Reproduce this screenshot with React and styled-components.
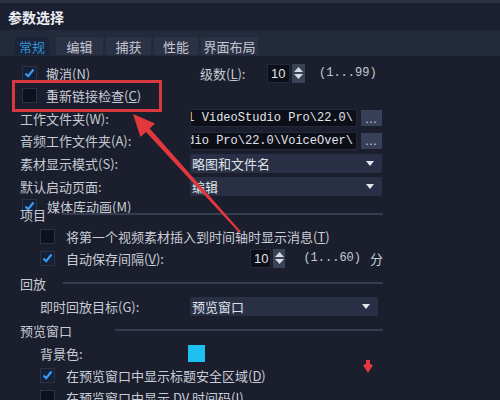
import React from 'react';
import styled, { createGlobalStyle } from 'styled-components';

const GlobalStyle = createGlobalStyle`
  html, body {
    margin: 0;
    padding: 0;
    background: #1b1f2d;
  }
  body {
    font-family: "Noto Sans CJK SC", "Noto Sans", sans-serif;
    overflow: hidden;
  }
`;

const Dialog = styled.div`
  position: relative;
  width: 500px;
  height: 400px;
  overflow: hidden;
  background: #1b1f2d;
  color: #c6cad3;
  font-size: 13px;
  line-height: 1;
`;

const TitleBar = styled.div`
  height: 27px;
  border-top: 3px solid #2c3246;
  background: #1b2030;
  display: flex;
  align-items: center;
  padding-left: 8px;
  font-size: 14px;
  font-weight: bold;
  color: #eceef3;
`;

const TabStrip = styled.div`
  box-sizing: border-box;
  height: 26px;
  padding: 7px 0 0 15px;
  background: #232a3b;
  display: flex;
  align-items: flex-start;
  gap: 3px;
`;

const Tab = styled.div`
  width: ${p => p.$w}px;
  height: 18px;
  margin-right: ${p => (p.$active ? 4 : 0)}px;
  display: flex;
  align-items: center;
  justify-content: center;
  background: ${p => (p.$active ? '#1a2539' : '#2b3246')};
  color: ${p => (p.$active ? '#3593da' : '#c4c8d1')};
  font-size: 13px;
`;

const Content = styled.div`
  width: 383px;
  padding-top: 6px;
  display: flex;
  flex-direction: column;
`;

const Row = styled.div`
  height: ${p => p.$h || 22}px;
  margin-top: ${p => p.$mt || 0}px;
  padding-left: ${p => p.$indent}px;
  display: flex;
  align-items: center;
  white-space: nowrap;
`;

const Segment = styled.div`
  width: ${p => p.$w}px;
  display: flex;
  align-items: center;
  flex-shrink: 0;
`;

const Label = styled.div`
  width: ${p => p.$w}px;
  flex-shrink: 0;
  color: #c6cad3;
`;

const Box = styled.div`
  box-sizing: border-box;
  width: 15px;
  height: 15px;
  flex-shrink: 0;
  margin-right: ${p => p.$gap || 9}px;
  border: 1px solid #2b3244;
  background: ${p => (p.$checked ? '#142038' : '#0d1120')};
  display: flex;
  align-items: center;
  justify-content: center;
`;

const CheckText = styled.span`
  color: #c9cdd6;
`;

const PathField = styled.div`
  box-sizing: border-box;
  width: 167px;
  height: 18px;
  padding-right: 3px;
  overflow: hidden;
  display: flex;
  justify-content: flex-end;
  align-items: center;
  background: #0c0f18;
  border: 1px solid #232938;
  font-family: "Liberation Mono", monospace;
  font-size: 12px;
  color: #e2e4ea;
`;

const Browse = styled.div`
  width: 21px;
  height: 16px;
  margin-left: 4px;
  background: #384058;
  color: #c6cee0;
  font-size: 11px;
  display: flex;
  align-items: center;
  justify-content: center;
  letter-spacing: 1px;
`;

const Select = styled.div`
  box-sizing: border-box;
  position: relative;
  width: ${p => p.$w || 192}px;
  height: 19px;
  padding-left: 2px;
  display: flex;
  align-items: center;
  background: #293045;
  border-radius: 2px;
  color: #dfe2e9;
  font-size: 13px;
  overflow: hidden;
`;

const Caret = styled.svg`
  position: absolute;
  right: 8px;
  top: 7px;
`;

const SpinValue = styled.div`
  box-sizing: border-box;
  width: 23px;
  height: 19px;
  padding-left: 3px;
  display: flex;
  align-items: center;
  background: #0c0f18;
  border: 1px solid #232938;
  font-family: "Liberation Sans", sans-serif;
  font-size: 13px;
  color: #e0e3ea;
`;

const SpinArrows = styled.div`
  width: 13px;
  height: 19px;
  margin-left: 2px;
  background: #3a4258;
  display: flex;
  flex-direction: column;
  align-items: center;
  justify-content: center;
  gap: 2px;
`;

const Hint = styled.span`
  margin-left: ${p => p.$ml}px;
  font-family: "Liberation Mono", monospace;
  font-size: 12px;
  color: #c6cad3;
`;

const Unit = styled.span`
  margin-left: 9px;
`;

const GroupHeader = styled.div`
  position: relative;
  height: 16px;
  margin-top: ${p => p.$mt}px;
  padding-left: 20px;
  display: flex;
  align-items: center;
`;

const GroupTitle = styled.span`
  color: #c6cad3;
  white-space: nowrap;
`;

const GroupLine = styled.div`
  flex: 1;
  height: 2px;
  margin-left: ${p => p.$gap}px;
  background: #363d50;
`;

const Swatch = styled.div`
  width: 17px;
  height: 17px;
  background: #1ec0f2;
`;

const Highlight = styled.div`
  position: absolute;
  left: 12px;
  top: 80px;
  width: 150px;
  height: 32px;
  box-sizing: border-box;
  border: 3px solid #d8393e;
`;

const Overlay = styled.svg`
  position: absolute;
  left: 0;
  top: 0;
  pointer-events: none;
`;

const Check = ({ checked, gap }) => (
  <Box $checked={checked} $gap={gap}>
    {checked && (
      <svg width="11" height="10" viewBox="0 0 11 10">
        <polyline points="1.5,5.5 4.2,8.2 9.5,1.5" fill="none" stroke="#3d9bef" strokeWidth="2.2" />
      </svg>
    )}
  </Box>
);

const Spin = ({ value }) => (
  <>
    <SpinValue>{value}</SpinValue>
    <SpinArrows>
      <svg width="9" height="5" viewBox="0 0 9 5"><polygon points="0,5 4.5,0 9,5" fill="#d5dae6" /></svg>
      <svg width="9" height="5" viewBox="0 0 9 5"><polygon points="0,0 9,0 4.5,5" fill="#d5dae6" /></svg>
    </SpinArrows>
  </>
);

const Dropdown = ({ children, w }) => (
  <Select $w={w}>
    {children}
    <Caret width="8" height="5" viewBox="0 0 8 5"><polygon points="0,0 8,0 4,5" fill="#e4e7ee" /></Caret>
  </Select>
);

const tabs = [
  { name: '常规', w: 34, active: true },
  { name: '编辑', w: 47 },
  { name: '捕获', w: 45 },
  { name: '性能', w: 44 },
  { name: '界面布局', w: 57 },
];

export default function App() {
  return (
    <Dialog>
      <GlobalStyle />
      <TitleBar>参数选择</TitleBar>
      <TabStrip>
        {tabs.map(t => (
          <Tab key={t.name} $w={t.w} $active={t.active}>{t.name}</Tab>
        ))}
      </TabStrip>
      <Content>
        <Row $indent={22}>
          <Segment $w={178}>
            <Check checked />
            <CheckText>撤消(<u>N</u>)</CheckText>
          </Segment>
          <Label $w={67}>级数(<u>L</u>):</Label>
          <Spin value="10" />
          <Hint $ml={14}>(1...99)</Hint>
        </Row>
        <Row $indent={22} $h={23}>
          <Check />
          <CheckText>重新链接检查(<u>C</u>)</CheckText>
        </Row>
        <Row $indent={20}>
          <Label $w={170}>工作文件夹(W):</Label>
          <PathField>C:\Users\Administrator\Documents\Corel VideoStudio Pro\22.0\</PathField>
          <Browse>...</Browse>
        </Row>
        <Row $indent={20} $h={23}>
          <Label $w={170}>音频工作文件夹(A):</Label>
          <PathField>C:\Users\Administrator\Documents\Corel VideoStudio Pro\22.0\VoiceOver\</PathField>
          <Browse>...</Browse>
        </Row>
        <Row $indent={20} $h={23}>
          <Label $w={170}>素材显示模式(S):</Label>
          <Dropdown>略图和文件名</Dropdown>
        </Row>
        <Row $indent={20}>
          <Label $w={170}>默认启动页面:</Label>
          <Dropdown>编辑</Dropdown>
        </Row>
        <Row $indent={22} $h={18}>
          <Check checked gap={10} />
          <CheckText>媒体库动画(<u>M</u>)</CheckText>
        </Row>
        <GroupHeader $mt={-9}>
          <GroupTitle>项目</GroupTitle>
          <GroupLine $gap={16} />
        </GroupHeader>
        <Row $indent={40} $mt={3}>
          <Check gap={11} />
          <CheckText>将第一个视频素材插入到时间轴时显示消息(<u>T</u>)</CheckText>
        </Row>
        <Row $indent={40}>
          <Segment $w={210}>
            <Check checked gap={11} />
            <CheckText>自动保存间隔(<u>V</u>):</CheckText>
          </Segment>
          <Spin value="10" />
          <Hint $ml={18}>(1...60)</Hint>
          <Unit>分</Unit>
        </Row>
        <GroupHeader $mt={6}>
          <GroupTitle>回放</GroupTitle>
          <GroupLine $gap={17} />
        </GroupHeader>
        <Row $indent={40} $mt={4}>
          <Label $w={150}>即时回放目标(G):</Label>
          <Dropdown w={188}>预览窗口</Dropdown>
        </Row>
        <GroupHeader $mt={5}>
          <GroupTitle>预览窗口</GroupTitle>
          <GroupLine $gap={43} />
        </GroupHeader>
        <Row $indent={40} $mt={4}>
          <Label $w={148}>背景色:</Label>
          <Swatch />
        </Row>
        <Row $indent={40}>
          <Check checked gap={11} />
          <CheckText>在预览窗口中显示标题安全区域(<u>D</u>)</CheckText>
        </Row>
        <Row $indent={40}>
          <Check gap={11} />
          <CheckText>在预览窗口中显示 DV 时间码(<u>I</u>)</CheckText>
        </Row>
      </Content>

      <Highlight />
      <Overlay width="500" height="400" viewBox="0 0 500 400">
        <polygon
          points="133,114 155,123.6 149.7,128.6 240.7,231.3 239.3,232.7 146,132 140.4,137"
          fill="#e0383c"
        />
        <polygon points="366,360 370,360 370,364 373,365 368,373 363,365 366,364" fill="#e8383c" />
      </Overlay>
    </Dialog>
  );
}
